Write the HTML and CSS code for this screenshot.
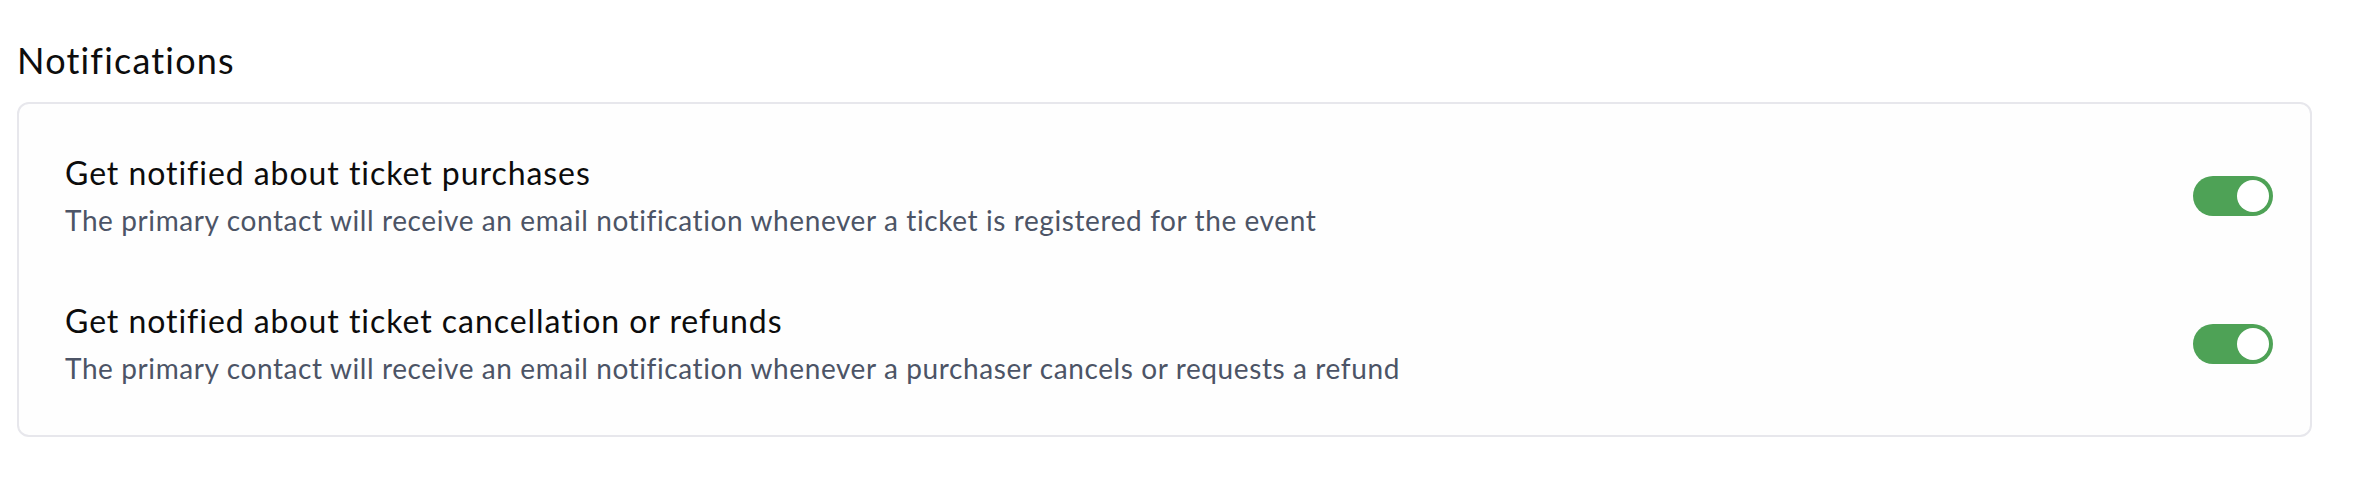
FILE: index.html
```html
<!DOCTYPE html>
<html lang="en">
<head>
<meta charset="utf-8">
<title>Notifications</title>
<link rel="stylesheet" href="styles.css">
</head>
<body>
<div class="page">
  <h2 class="section-title">Notifications</h2>
  <div class="card">
    <div class="row">
      <div class="row-text">
        <div class="row-title">Get notified about ticket purchases</div>
        <div class="row-desc">The primary contact will receive an email notification whenever a ticket is registered for the event</div>
      </div>
      <div class="toggle is-on" role="switch" aria-checked="true"><span class="knob"></span></div>
    </div>
    <div class="row">
      <div class="row-text">
        <div class="row-title">Get notified about ticket cancellation or refunds</div>
        <div class="row-desc">The primary contact will receive an email notification whenever a purchaser cancels or requests a refund</div>
      </div>
      <div class="toggle is-on" role="switch" aria-checked="true"><span class="knob"></span></div>
    </div>
  </div>
</div>
</body>
</html>
```
FILE: styles.css
```css
* { box-sizing: border-box; }
html, body { margin: 0; padding: 0; background: #ffffff; }
body {
  font-family: Lato, "Open Sans", "Liberation Sans", sans-serif;
  color: #111111;
  font-variant-ligatures: none;
}

.page { padding: 36px 42px 0 17px; }

.section-title {
  margin: 0 0 18px 0;
  font-size: 36px;
  line-height: 48px;
  font-weight: 400;
  letter-spacing: 1.2px;
  color: #0d0d0d;
}

.card {
  background: #fefefe;
  border: 2px solid #e7e7ec;
  border-radius: 12px;
  padding: 18px 37px 17px 46px;
  display: flex;
  flex-direction: column;
}

.row {
  display: flex;
  align-items: center;
  justify-content: space-between;
  padding: 30px 0;
}

.row-text { display: flex; flex-direction: column; gap: 6px; }

.row-title {
  font-size: 32px;
  line-height: 42px;
  letter-spacing: 0.95px;
  color: #0c0c0c;
}

.row-desc {
  font-size: 28px;
  line-height: 40px;
  letter-spacing: 0.6px;
  color: #4c5466;
}

.toggle {
  width: 80px;
  height: 40px;
  border-radius: 20px;
  background: #4ea256;
  padding: 4px;
  display: flex;
  justify-content: flex-end;
  align-items: center;
  flex: none;
}
.knob {
  width: 32px;
  height: 32px;
  border-radius: 50%;
  background: #ffffff;
}
```
